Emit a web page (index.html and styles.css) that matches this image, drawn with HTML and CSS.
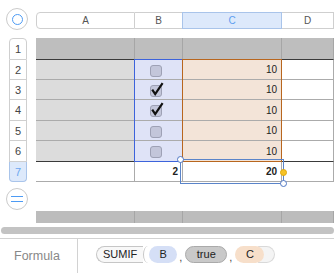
FILE: index.html
```html
<!DOCTYPE html>
<html lang="en">
<head>
  <meta charset="UTF-8">
  <title>Sheet</title>
  <link rel="stylesheet" href="styles.css">
</head>
<body>
  <div class="app">

    <!-- Column headers -->
    <div class="head-row">
      <div class="gutter corner">
        <span class="round-btn"><i class="ring"></i></span>
      </div>
      <div class="col-heads">
        <div class="ch">A</div>
        <div class="ch">B</div>
        <div class="ch active">C</div>
        <div class="ch">D</div>
      </div>
    </div>

    <!-- Table -->
    <div class="grid-wrap">
      <div class="row-heads">
        <div class="rh">1</div>
        <div class="rh">2</div>
        <div class="rh">3</div>
        <div class="rh">4</div>
        <div class="rh">5</div>
        <div class="rh">6</div>
        <div class="rh active">7</div>
      </div>

      <div class="table">
        <div class="cell head"></div><div class="cell head"></div><div class="cell head"></div><div class="cell head"></div>

        <div class="cell label"></div>
        <div class="cell check"><svg width="18" height="16" viewBox="0 0 18 16"><rect x="1.5" y="3.5" width="11" height="11" rx="2.5" class="box"/></svg></div>
        <div class="cell amount">10</div>
        <div class="cell"></div>

        <div class="cell label"></div>
        <div class="cell check"><svg width="18" height="16" viewBox="0 0 18 16"><rect x="1.5" y="3.5" width="11" height="11" rx="2.5" class="box"/><path d="M3.2 7.6 L6.2 12 L13.6 1.2" class="tick"/></svg></div>
        <div class="cell amount">10</div>
        <div class="cell"></div>

        <div class="cell label"></div>
        <div class="cell check"><svg width="18" height="16" viewBox="0 0 18 16"><rect x="1.5" y="3.5" width="11" height="11" rx="2.5" class="box"/><path d="M3.2 7.6 L6.2 12 L13.6 1.2" class="tick"/></svg></div>
        <div class="cell amount">10</div>
        <div class="cell"></div>

        <div class="cell label"></div>
        <div class="cell check"><svg width="18" height="16" viewBox="0 0 18 16"><rect x="1.5" y="3.5" width="11" height="11" rx="2.5" class="box"/></svg></div>
        <div class="cell amount">10</div>
        <div class="cell"></div>

        <div class="cell label last"></div>
        <div class="cell check last"><svg width="18" height="16" viewBox="0 0 18 16"><rect x="1.5" y="3.5" width="11" height="11" rx="2.5" class="box"/></svg></div>
        <div class="cell amount last">10</div>
        <div class="cell last"></div>

        <div class="cell total"></div>
        <div class="cell total">2</div>
        <div class="cell total">20</div>
        <div class="cell total"></div>

        <!-- range highlights and selection -->
        <div class="range range-b"></div>
        <div class="range range-c"></div>
        <div class="selection">
          <span class="handle tl"></span>
          <span class="handle fill"></span>
          <span class="handle br"></span>
        </div>
      </div>
    </div>

    <!-- Add row + next table -->
    <div class="foot-row">
      <div class="gutter add">
        <span class="round-btn"><i class="equals"></i></span>
      </div>
      <div class="next-table">
        <div class="nt"></div><div class="nt"></div><div class="nt"></div><div class="nt"></div>
      </div>
    </div>

    <div class="scroll"><div class="thumb"></div></div>

    <!-- Formula bar -->
    <div class="formula-bar">
      <div class="fb-label">Formula</div>
      <div class="fb-tokens">
        <span class="tok fn">SUMIF</span><span class="paren-open"></span>
        <span class="tok pill ref-b">B</span><span class="comma">,</span>
        <span class="tok pill bool">true</span><span class="comma">,</span>
        <span class="tok pill ref-c">C</span><span class="paren-close"></span>
      </div>
    </div>

  </div>
</body>
</html>
```

FILE: styles.css
```css
* {
  box-sizing: border-box;
  margin: 0;
  padding: 0;
}

body {
  font-family: 'Liberation Sans', Arial, sans-serif;
  background-color: #fff;
  color: #222;
  width: 334px;
  height: 273px;
  overflow: hidden;
}

.app {
  width: 334px;
}

.gutter {
  width: 36px;
  flex: none;
}

/* round buttons on the left */
.round-btn {
  width: 22px;
  height: 22px;
  border: 1px solid #cbcbcb;
  border-radius: 50%;
  background-color: #fff;
  display: flex;
  align-items: center;
  justify-content: center;
}

.ring {
  width: 11px;
  height: 11px;
  border: 1.6px solid #4d9bf4;
  border-radius: 50%;
}

.equals {
  width: 12px;
  height: 6px;
  border-top: 1.5px solid #4d9bf4;
  border-bottom: 1.5px solid #4d9bf4;
}

/* column headers */
.head-row {
  display: flex;
  height: 30px;
}

.corner {
  padding: 8px 0 0 6px;
}

.col-heads {
  flex: 1;
  margin-top: 12px;
  height: 17px;
  display: grid;
  grid-template-columns: 99px 48px 99px 1fr;
}

.ch {
  border: 1px solid #cfcfcf;
  border-left: none;
  font-size: 10px;
  line-height: 15px;
  color: #555;
  text-align: center;
  background-color: #fff;
}

.ch:first-child {
  border-left: 1px solid #cfcfcf;
  border-radius: 4px 0 0 4px;
}

.ch.active {
  margin-left: -1px;
  border-left: 1px solid #a9c4ea;
  border-color: #a9c4ea;
  background-color: #dde9fb;
  color: #5d9ef0;
}

/* grid */
.grid-wrap {
  display: flex;
  margin-top: 8px;
}

.row-heads {
  width: 18px;
  margin: 0 9px;
  display: grid;
  grid-template-rows: 22px 20px 20px 21px 20px 21px 20px;
}

.rh {
  border: 1px solid #cfcfcf;
  border-top: none;
  font-size: 11px;
  color: #444;
  display: flex;
  align-items: center;
  justify-content: center;
  background-color: #fff;
}

.rh:first-child {
  border-top: 1px solid #cfcfcf;
  border-radius: 4px 4px 0 0;
}

.rh.active {
  background-color: #dde9fb;
  border-color: #a9c4ea;
  color: #6aa6f0;
  border-radius: 0 0 4px 4px;
}

.table {
  flex: 1;
  position: relative;
  display: grid;
  grid-template-columns: 99px 48px 99px 1fr;
  grid-template-rows: 22px 20px 20px 21px 20px 21px 20px;
}

.cell {
  border-right: 1px solid #ababab;
  border-bottom: 1px solid #ababab;
  font-size: 10px;
  color: #222;
  display: flex;
  align-items: center;
  justify-content: flex-end;
  padding-right: 4px;
}

.cell.head {
  background-color: #bebebe;
  border-right-color: #a6a6a6;
  border-bottom-color: #3a3a3a;
}

.cell.label {
  background-color: #dcdcdc;
}

.cell.check {
  background-color: #dfe3f7;
  justify-content: center;
  padding-right: 2px;
}

.cell.amount {
  background-color: #f3e4d8;
}

.cell.last {
  border-bottom-color: #3a3a3a;
}

.cell.total {
  font-weight: bold;
}

.box {
  fill: #c3c6da;
  stroke: #9ea1b5;
  stroke-width: 1;
}

.tick {
  fill: none;
  stroke: #111;
  stroke-width: 2.2;
}

/* highlighted ranges */
.range {
  position: absolute;
  top: 21px;
  height: 103px;
}

.range-b {
  left: 98px;
  width: 49px;
  border: 1px solid #3d63db;
}

.range-c {
  left: 146px;
  width: 100px;
  border: 1px solid #b8661e;
}

.selection {
  position: absolute;
  left: 144px;
  top: 121px;
  width: 104px;
  height: 25px;
  border: 1px solid #5a84c9;
}

.handle {
  position: absolute;
  width: 7px;
  height: 7px;
  border-radius: 50%;
  background-color: #fff;
  border: 1px solid #4f77c4;
}

.handle.tl {
  left: -4px;
  top: -4px;
}

.handle.br {
  right: -4px;
  bottom: -4px;
}

.handle.fill {
  right: -4px;
  top: 9px;
  background-color: #f6c327;
  border-color: #dfa90e;
}

/* add row and next table */
.foot-row {
  display: flex;
  height: 41px;
}

.add {
  padding: 6px 0 0 6px;
}

.next-table {
  flex: 1;
  margin-top: 29px;
  height: 12px;
  display: grid;
  grid-template-columns: 99px 48px 99px 1fr;
  background-color: #bcbcbc;
}

.nt {
  border-right: 1px solid #a6a6a6;
}

.scroll {
  height: 16px;
  padding-top: 4px;
  border-bottom: 1px solid #d2d2d2;
}

.thumb {
  height: 7px;
  margin-left: 1px;
  border-radius: 4px;
  background-color: #c3c3c3;
}

/* formula bar */
.formula-bar {
  display: flex;
  height: 34px;
}

.fb-label {
  width: 78px;
  border-right: 1px solid #d2d2d2;
  padding-left: 14px;
  font-size: 12.5px;
  color: #888;
  line-height: 34px;
}

.fb-tokens {
  display: flex;
  align-items: center;
  padding: 7px 0 0 18px;
  align-self: flex-start;
  font-size: 11px;
}

.tok {
  height: 17px;
  line-height: 15px;
  color: #222;
  text-align: center;
  position: relative;
  z-index: 1;
}

.fn {
  border: 1px solid #c6c6c6;
  border-right: none;
  border-radius: 8.5px 0 0 8.5px;
  background-color: #f8f8f8;
  padding: 0 6px 0 6px;
}

.paren-open {
  width: 5px;
  height: 17px;
  border-left: 1px solid #c6c6c6;
  border-radius: 5px 0 0 5px / 8.5px 0 0 8.5px;
}

.pill {
  border-radius: 8.5px;
  border: 1px solid transparent;
}

.ref-b {
  width: 28px;
  margin-left: 1px;
  background-color: #d5dff6;
}

.bool {
  width: 42px;
  background-color: #c9c9c9;
  border-color: #aaa;
}

.ref-c {
  width: 29px;
  background-color: #f7dfca;
}

.comma {
  color: #444;
  margin: 0 3px 0 2px;
  padding-top: 4px;
}

.paren-close {
  width: 17px;
  height: 17px;
  margin-left: -6px;
  border: 1px solid #d9d9d9;
  border-left: none;
  border-radius: 0 8.5px 8.5px 0;
  background-color: #f4f4f4;
}
```
